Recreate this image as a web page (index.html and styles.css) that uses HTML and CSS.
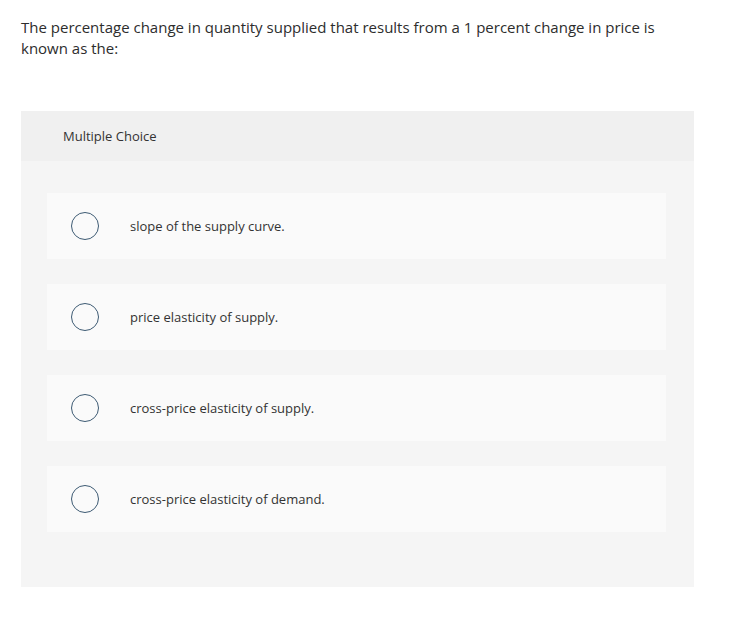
FILE: index.html
```html
<!DOCTYPE html>
<html>
<head>
<meta charset="utf-8">
<link rel="stylesheet" href="styles.css">
</head>
<body>
<div class="page">
  <p class="question">The percentage change in quantity supplied that results from a 1 percent change in price is known as the:</p>
  <div class="panel">
    <div class="panel-head">Multiple Choice</div>
    <div class="panel-body">
      <div class="option"><span class="radio"></span><span class="label">slope of the supply curve.</span></div>
      <div class="option"><span class="radio"></span><span class="label">price elasticity of supply.</span></div>
      <div class="option"><span class="radio"></span><span class="label">cross-price elasticity of supply.</span></div>
      <div class="option"><span class="radio"></span><span class="label">cross-price elasticity of demand.</span></div>
    </div>
  </div>
</div>
</body>
</html>
```
FILE: styles.css
```css
html, body {
  margin: 0;
  padding: 0;
  background: #ffffff;
}
body {
  font-family: "Open Sans", Lato, sans-serif;
  color: #333333;
}
.page {
  padding: 17px 55px 0 21px;
}
.question {
  margin: 0;
  font-size: 15px;
  line-height: 21px;
  width: 660px;
  color: #2d2d2d;
}
.panel {
  margin-top: 52px;
  width: 673px;
  background: #f5f5f5;
}
.panel-head {
  height: 50px;
  background: #f0f0f0;
  padding-left: 42px;
  font-size: 13px;
  line-height: 50px;
  color: #333333;
}
.panel-body {
  padding: 32px 28px 55px 26px;
  display: flex;
  flex-direction: column;
  gap: 25px;
}
.option {
  height: 66px;
  background: #fafafa;
  display: flex;
  align-items: center;
  padding-left: 24px;
}
.radio {
  border: 1.4px solid #3d5a73;
  border-radius: 50%;
  box-sizing: border-box;
  width: 28px;
  height: 28px;
  flex: none;
}
.label {
  margin-left: 31px;
  font-size: 13px;
  color: #333333;
}
```
